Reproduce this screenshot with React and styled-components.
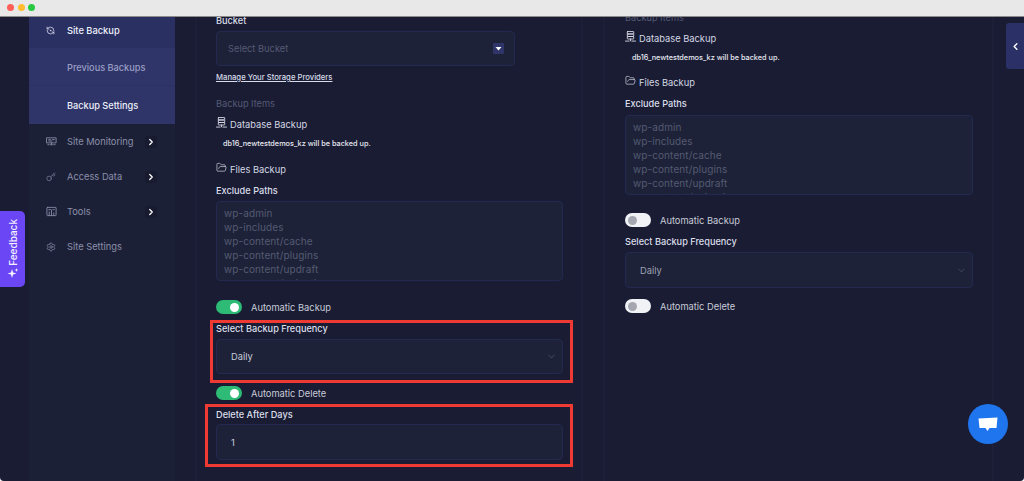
import React from "react";
import styled, { createGlobalStyle } from "styled-components";
import { ChevronDown, ChevronLeft, ChevronRight, FolderOpen, Key, RefreshCcwDot, Settings } from "lucide-react";

const Global = createGlobalStyle`
  html, body { margin: 0; height: 481px; overflow: hidden; background: #fff; }
  * { box-sizing: border-box; }
  body { font-family: Inter, "Open Sans", sans-serif; }
`;

const Frame = styled.div`
  position: relative; width: 1024px; height: 481px; overflow: hidden;
  background: #191c33; border-radius: 0 0 4px 4px;
`;
const TitleBar = styled.header`
  position: relative; z-index: 2; height: 17px; background: #e8e8e8; border-bottom: 1px solid #8b8b8b;
  display: flex; align-items: center; gap: 3.5px; padding: 0 0 1px 7px;
`;
const Dot = styled.span`
  width: 7px; height: 7px; border-radius: 50%; background: ${p => p.$c};
`;
const Layout = styled.div`
  display: grid; grid-template-columns: 146px 388px 391px; column-gap: 20px;
  padding-left: 29px; height: 464px;
`;
const Sidebar = styled.nav`
  background: #1c2037; display: flex; flex-direction: column; height: 100%;
`;
const ActiveGroup = styled.div`
  display: flex; flex-direction: column; background: #2f3569;
`;
const TopItem = styled.div`
  height: 31px; display: flex; align-items: center; padding: 0 0 4px 17px;
  background: #2b3063; color: #eef0fa; font-size: 9.3px; font-weight: 500;
`;
const SubItem = styled.div`
  height: 38px; display: flex; align-items: center; padding-left: 38px;
  font-size: 9.2px; font-weight: 500; color: ${p => (p.$on ? "#eef0fa" : "#9a9ec4")};
  padding-top: ${p => (p.$on ? 0 : 2)}px;
  border-bottom: ${p => (p.$on ? "0" : "1px solid #2c3163")};
`;
const NavItem = styled.div`
  height: 35px; display: flex; align-items: center; padding-left: 17px;
  font-size: 9.3px; color: #8b8fa9;
`;
const NavIcon = styled.span`
  width: 21px; display: flex; align-items: center; color: ${p => (p.$on ? "#dfe2f2" : "#858aa4")};
`;
const NavList = styled.div`
  display: flex; flex-direction: column;
`;
const Expand = styled.span`
  margin-left: auto; margin-right: 18px; width: 12px; height: 12px; border-radius: 2px;
  background: #181b30; color: #fff; display: flex; align-items: center; justify-content: center;
`;
const Panel = styled.section`
  border-left: 2px solid #1c1f37; border-right: 2px solid #1c1f37;
  padding-left: ${p => p.$pad}px; height: 100%; overflow: hidden;
`;
const Column = styled.div`
  width: ${p => p.$w}px; display: flex; flex-direction: column; margin-top: ${p => p.$top}px;
`;
const Label = styled.div`
  height: ${p => p.$h || 14}px; line-height: ${p => p.$h || 14}px; font-size: 9.2px; font-weight: 500;
  color: #dcdfea; white-space: nowrap; margin-top: ${p => p.$mt || 0}px;
`;
const Faint = styled(Label)`
  color: #565a75; font-weight: 400;
`;
const StorageLink = styled.a`
  display: block; width: fit-content; height: 10px; line-height: 10px; margin-top: 7px; font-size: 7.7px; font-weight: 500;
  color: #d8dbe8; text-decoration: underline; white-space: nowrap;
`;
const IconRow = styled.div`
  height: 16px; display: flex; align-items: center; gap: 3px; margin-top: ${p => p.$mt}px;
  font-size: 9.3px; color: #d5d8e4; white-space: nowrap;
`;
const IconLift = styled.span`
  display: flex; margin-top: -4px; color: #d5d8e4;
`;
const Note = styled.div`
  height: 12px; line-height: 12px; padding-left: 7px; margin-top: ${p => p.$mt}px; font-size: 7.3px; font-weight: 500;
  color: #e6e8f0; white-space: nowrap;
`;
const Field = styled.div`
  width: ${p => p.$w || "100%"}; height: ${p => p.$h || 35}px; margin-top: ${p => p.$mt}px;
  background: #1d2238; border: 1px solid #23294f; border-radius: 4px;
  display: flex; align-items: center; justify-content: space-between;
  padding: 0 ${p => p.$right || 5}px 0 14px; font-size: 9.3px; color: ${p => p.$c || "#c8cbd9"};
`;
const BucketField = styled(Field)`
  padding-left: 11px;
`;
const CaretBox = styled.span`
  width: 11px; height: 11px; border-radius: 1px; background: #2f3569; display: flex; align-items: center; justify-content: center;
`;
const Paths = styled.div`
  height: 80px; margin-top: ${p => p.$mt}px; padding: 4px 7px; overflow: hidden;
  background: #1d2238; border: 1px solid #23294f; border-radius: 4px;
  font-size: 10px; letter-spacing: 0.1px; line-height: 14px; color: #555a72;
`;
const ToggleRow = styled.div`
  height: 14px; display: flex; align-items: center; gap: 9px; margin-top: ${p => p.$mt}px;
  font-size: 9.3px; color: #c9ccd9; white-space: nowrap;
`;
const Toggle = styled.span`
  width: 26px; height: 14px; border-radius: 7px; padding: 0 3px; display: flex; align-items: center;
  justify-content: ${p => (p.$on ? "flex-end" : "flex-start")};
  background: ${p => (p.$on ? "#2dbb76" : "#f1f2f6")};
  &::after { content: ""; width: 9px; height: 9px; border-radius: 50%; background: ${p => (p.$on ? "#fff" : "#a5a7b0")}; }
`;
const Highlight = styled.div`
  border: 3px solid #ee3a33; margin: ${p => p.$mt}px -10px 0 -${p => p.$out}px;
  padding: ${p => p.$pt}px 7px ${p => p.$pb}px ${p => p.$out - 3}px;
`;
const SideTab = styled.button`
  position: absolute; z-index: 1; top: 23px; right: 0; width: 18px; height: 46px; padding: 0; border: 0;
  background: #2b3166; border-radius: 3px 0 0 3px; color: #fff; display: flex; align-items: center; justify-content: center;
`;
const Feedback = styled.button`
  position: absolute; left: 0; top: 211px; width: 25px; height: 76px; border: 0; padding: 0 0 8px; border-radius: 0 5px 5px 0;
  background: #6b46f5; color: #f4f1ff; font: 500 10px Inter, sans-serif;
  display: flex; flex-direction: row-reverse; align-items: center; justify-content: flex-start; gap: 1px; writing-mode: vertical-rl;
  & > span { transform: rotate(180deg); }
`;
const Chat = styled.button`
  position: absolute; left: 968px; top: 404px; width: 40px; height: 40px; padding: 0; border: 0; border-radius: 50%;
  background: #1f75ee; display: flex; align-items: center; justify-content: center;
`;

const Ico = ({ children, s = 11, sw = 1.3 }) => (
  <svg width={s} height={s} viewBox="0 0 24 24" fill="none" stroke="currentColor" strokeWidth={sw} strokeLinecap="round" strokeLinejoin="round">{children}</svg>
);
const MonitorIcon = () => (
  <Ico sw={2}><rect x="2" y="4" width="20" height="11" /><path d="M6 8h4M6 11h7M14 8h4M4 19h3M10 19h4M17 19h3M12 15v4" /></Ico>
);
const ToolsIcon = () => (
  <Ico sw={2}><rect x="2" y="3" width="20" height="18" rx="1" /><path d="M7 21v-8M12 21V9M17 21v-6M6 8h4M15 8h3" /></Ico>
);
const DbIcon = () => (
  <Ico s={11} sw={2}><rect x="5" y="1" width="14" height="5.5" rx="1" /><rect x="5" y="6.5" width="14" height="5.5" rx="1" /><rect x="5" y="12" width="14" height="5.5" rx="1" /><path d="M12 17.5v4M1 22h8M15 22h8" /></Ico>
);
const Spark = () => (
  <svg width="12" height="12" viewBox="0 0 24 24" fill="currentColor" aria-hidden="true"><path d="M10 4l2.2 6.8L19 13l-6.8 2.2L10 22l-2.2-6.8L1 13l6.8-2.2zM19 2l1 3 3 1-3 1-1 3-1-3-3-1 3-1z" /></svg>
);

const paths = ["wp-admin", "wp-includes", "wp-content/cache", "wp-content/plugins", "wp-content/updraft", "wp-content/uploads"];
const PathList = ({ mt }) => (
  <Paths $mt={mt}>{paths.map(t => <div key={t}>{t}</div>)}</Paths>
);
const Chevron = ({ c }) => <ChevronDown size={11} color={c} strokeWidth={1.2} />;

export default function App() {
  return (
    <Frame>
      <Global />
      <TitleBar>
        <Dot $c="#ff5f57" /><Dot $c="#febc2e" /><Dot $c="#28c840" />
      </TitleBar>
      <Layout>
        <Sidebar>
          <ActiveGroup>
            <TopItem><NavIcon $on><RefreshCcwDot size={9} strokeWidth={2} /></NavIcon>Site Backup</TopItem>
            <SubItem>Previous Backups</SubItem>
            <SubItem $on>Backup Settings</SubItem>
          </ActiveGroup>
          <NavList>
            <NavItem><NavIcon><MonitorIcon /></NavIcon>Site Monitoring<Expand><ChevronRight size={10} strokeWidth={3} /></Expand></NavItem>
            <NavItem><NavIcon><Key size={10} strokeWidth={1.6} /></NavIcon>Access Data<Expand><ChevronRight size={10} strokeWidth={3} /></Expand></NavItem>
            <NavItem><NavIcon><ToolsIcon /></NavIcon>Tools<Expand><ChevronRight size={10} strokeWidth={3} /></Expand></NavItem>
            <NavItem><NavIcon><Settings size={10} strokeWidth={1.8} /></NavIcon>Site Settings</NavItem>
          </NavList>
        </Sidebar>

        <Panel $pad={19}>
          <Column $w={347} $top={-3}>
            <Label>Bucket</Label>
            <BucketField $w="299px" $mt={3} $c="#565a75" $right={10}>
              Select Bucket
              <CaretBox><svg width="7" height="5" viewBox="0 0 7 5" aria-hidden="true"><path d="M0.5 1h6L3.5 4.5z" fill="#fff" /></svg></CaretBox>
            </BucketField>
            <StorageLink>Manage Your Storage Providers</StorageLink>
            <Faint $mt={14}>Backup Items</Faint>
            <IconRow $mt={5}><IconLift><DbIcon /></IconLift>Database Backup</IconRow>
            <Note $mt={6}>db16_newtestdemos_kz will be backed up.</Note>
            <IconRow $mt={11}><IconLift><FolderOpen size={11} strokeWidth={1.5} /></IconLift>Files Backup</IconRow>
            <Label $mt={7}>Exclude Paths</Label>
            <PathList mt={3} />
            <ToggleRow $mt={19}><Toggle $on />Automatic Backup</ToggleRow>
            <Highlight $mt={6} $out={6} $pt={1} $pb={6}>
              <Label $h={10}>Select Backup Frequency</Label>
              <Field $mt={5}>Daily<Chevron c="#6b7090" /></Field>
            </Highlight>
            <ToggleRow $mt={3}><Toggle $on />Automatic Delete</ToggleRow>
            <Highlight $mt={4} $out={11} $pt={3} $pb={4}>
              <Label $h={10}>Delete After Days</Label>
              <Field $mt={4} $h={36}>1</Field>
            </Highlight>
          </Column>
        </Panel>

        <Panel $pad={20}>
          <Column $w={348} $top={-6}>
            <Faint>Backup Items</Faint>
            <IconRow $mt={5}><IconLift><DbIcon /></IconLift>Database Backup</IconRow>
            <Note $mt={6}>db16_newtestdemos_kz will be backed up.</Note>
            <IconRow $mt={10}><IconLift><FolderOpen size={11} strokeWidth={1.5} /></IconLift>Files Backup</IconRow>
            <Label $mt={7}>Exclude Paths</Label>
            <PathList mt={4} />
            <ToggleRow $mt={18}><Toggle />Automatic Backup</ToggleRow>
            <Label $h={10} $mt={10}>Select Backup Frequency</Label>
            <Field $mt={5} $h={36} $c="#9da0b3">Daily<Chevron c="#5c6080" /></Field>
            <ToggleRow $mt={11}><Toggle />Automatic Delete</ToggleRow>
          </Column>
        </Panel>
      </Layout>

      <SideTab aria-label="Collapse"><ChevronLeft size={11} strokeWidth={3} /></SideTab>
      <Feedback><Spark /><span>Feedback</span></Feedback>
      <Chat aria-label="Chat">
        <svg width="20" height="15" viewBox="0 0 20 15" aria-hidden="true"><path d="M0.5 1.5L19.5 0.5L18.5 11H11.5L9.5 14L7.5 11H1.5z" fill="#fff" /></svg>
      </Chat>
    </Frame>
  );
}
